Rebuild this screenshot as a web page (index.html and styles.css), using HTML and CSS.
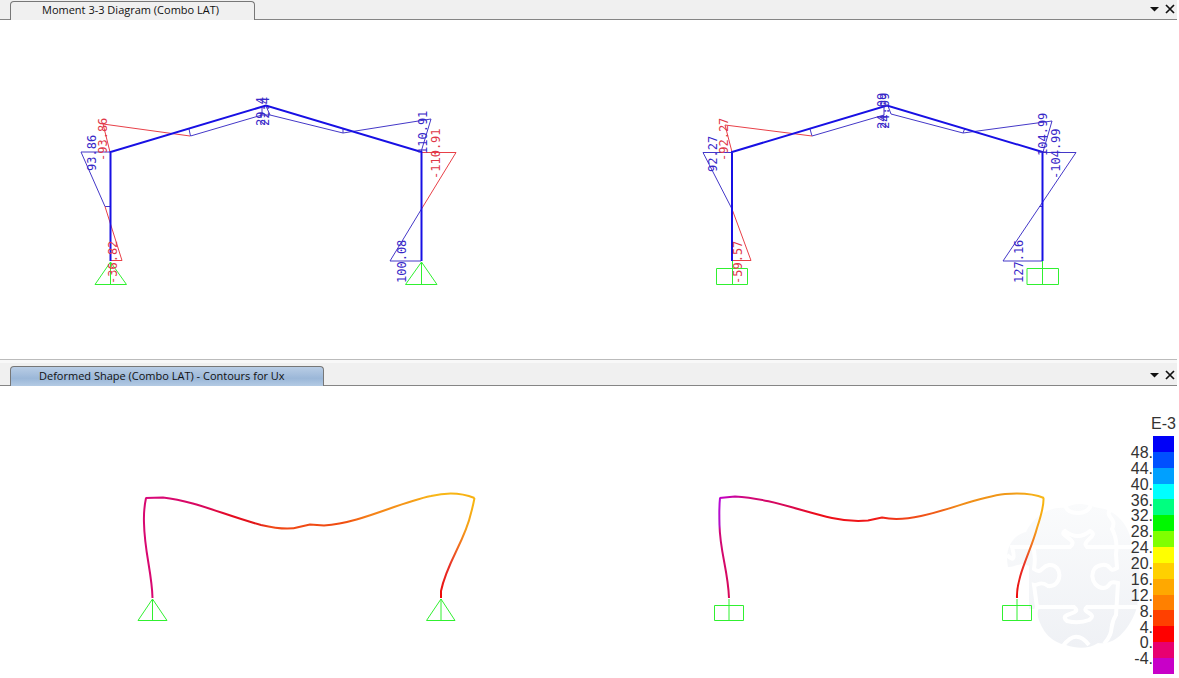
FILE: index.html
```html
<!DOCTYPE html>
<html lang="en">
<head>
    <meta charset="UTF-8">
    <meta name="viewport" content="width=device-width, initial-scale=1.0">
    <title>Portal frame results</title>
    <link rel="stylesheet" href="styles.css">
</head>
<body>
    <section class="pane">
        <div class="tabbar">
            <button type="button" class="tab tab-moment">Moment 3-3 Diagram (Combo LAT)</button>
            <div class="tab-actions">
                <button type="button" class="icon-btn" aria-label="Window list">
                    <svg width="9" height="5" viewBox="0 0 9 5"><path d="M0 0h9L4.500 4.500z" fill="#111"/></svg>
                </button>
                <button type="button" class="icon-btn" aria-label="Close">
                    <svg width="10" height="10" viewBox="0 0 10 10"><path d="M1 1l8 8M9 1l-8 8" stroke="#111" stroke-width="1.700"/></svg>
                </button>
            </div>
        </div>

        <svg class="scene" viewBox="0 20 1177 339">
            <!-- pinned frame -->
            <g class="moment positive">
                <path d="M110 152H81L105 206.500H110M189 129L190.500 136L262 115V106M266 106L270 115L343 133V128M343 133L431 119L421 152M262 115H270"/>
                <path d="M421.500 209L390 261H421"/>
            </g>
            <g class="moment negative">
                <path d="M110 152L103 124L190 136M105 206.500L122 260.500H110M421 152.500H456L421.500 209"/>
            </g>
            <path class="support" d="M110.500 262L95 284.500H126.500ZM110.500 262V284M421.500 262L405.500 284.500H437ZM421.500 262V284"/>
            <path class="member" d="M110.500 261V152L266 105.500L421.500 152V261"/>
            <g class="values positive">
                <text transform="translate(96 171) rotate(-90)">93.86</text>
                <text transform="translate(265 126) rotate(-90)">29.4</text>
                <text transform="translate(269 126) rotate(-90)">22.4</text>
                <text transform="translate(427 154) rotate(-90)">110.91</text>
                <text transform="translate(406 283) rotate(-90)">100.08</text>
            </g>
            <g class="values negative">
                <text transform="translate(107 161) rotate(-90)">-93.86</text>
                <text transform="translate(117 284) rotate(-90)">-36.82</text>
                <text transform="translate(440 179) rotate(-90)">-110.91</text>
            </g>

            <!-- fixed frame -->
            <g class="moment positive">
                <path d="M732 152.500H703L732 209M810 129L812 136L884 115V106M888 106L891 114L963 133L965 128M963 133L1052 121L1043 152"/>
                <path d="M1042 152.500H1076L1003 261H1042M1039 206.500H1043"/>
            </g>
            <g class="moment negative">
                <path d="M732 152L725 125L812 136M732 209L751 260.500H732"/>
            </g>
            <path class="support" d="M716.500 268.500H747.500V284.500H716.500ZM732.500 261V284M1027 268.500H1058.500V284.500H1027ZM1042.500 261V284"/>
            <path class="member" d="M732 261V152L887 105.500L1042.500 152V261"/>
            <g class="values positive">
                <text transform="translate(717 172) rotate(-90)">92.27</text>
                <text transform="translate(886 129) rotate(-90)">24.09</text>
                <text transform="translate(889 129) rotate(-90)">24.09</text>
                <text transform="translate(1047 156) rotate(-90)">104.99</text>
                <text transform="translate(1060 179) rotate(-90)">-104.99</text>
                <text transform="translate(1023 283) rotate(-90)">127.16</text>
            </g>
            <g class="values negative">
                <text transform="translate(728 161) rotate(-90)">-92.27</text>
                <text transform="translate(742 284) rotate(-90)">-59.57</text>
            </g>
        </svg>
    </section>

    <section class="pane pane-lower">
        <div class="tabbar">
            <button type="button" class="tab tab-shape active">Deformed Shape (Combo LAT) - Contours for Ux</button>
            <div class="tab-actions">
                <button type="button" class="icon-btn" aria-label="Window list">
                    <svg width="9" height="5" viewBox="0 0 9 5"><path d="M0 0h9L4.500 4.500z" fill="#111"/></svg>
                </button>
                <button type="button" class="icon-btn" aria-label="Close">
                    <svg width="10" height="10" viewBox="0 0 10 10"><path d="M1 1l8 8M9 1l-8 8" stroke="#111" stroke-width="1.700"/></svg>
                </button>
            </div>
        </div>

        <svg class="scene" viewBox="0 386 1177 292">
            <defs>
                <linearGradient id="beamPinned" gradientUnits="userSpaceOnUse" x1="145" y1="0" x2="475" y2="0">
                    <stop offset="0" stop-color="#d8087c"/>
                    <stop offset="0.180" stop-color="#d8085c"/>
                    <stop offset="0.260" stop-color="#e60a20"/>
                    <stop offset="0.340" stop-color="#e01818"/>
                    <stop offset="0.380" stop-color="#f04818"/>
                    <stop offset="0.600" stop-color="#f04c10"/>
                    <stop offset="0.680" stop-color="#f58018"/>
                    <stop offset="0.800" stop-color="#f59a18"/>
                    <stop offset="0.880" stop-color="#f8b818"/>
                    <stop offset="1" stop-color="#f8b010"/>
                </linearGradient>
                <linearGradient id="beamFixed" gradientUnits="userSpaceOnUse" x1="719" y1="0" x2="1044" y2="0">
                    <stop offset="0" stop-color="#c000c8"/>
                    <stop offset="0.080" stop-color="#d0087c"/>
                    <stop offset="0.220" stop-color="#d80850"/>
                    <stop offset="0.300" stop-color="#ec0c18"/>
                    <stop offset="0.480" stop-color="#f01818"/>
                    <stop offset="0.560" stop-color="#f04018"/>
                    <stop offset="0.680" stop-color="#f06018"/>
                    <stop offset="0.740" stop-color="#f08c18"/>
                    <stop offset="0.900" stop-color="#f09a18"/>
                    <stop offset="1" stop-color="#f8b818"/>
                </linearGradient>
                <linearGradient id="columnLeft" gradientUnits="userSpaceOnUse" x1="0" y1="498" x2="0" y2="598">
                    <stop offset="0" stop-color="#b808d8"/>
                    <stop offset="0.280" stop-color="#b010c8"/>
                    <stop offset="0.320" stop-color="#d00878"/>
                    <stop offset="1" stop-color="#d80858"/>
                </linearGradient>
                <linearGradient id="columnRight" gradientUnits="userSpaceOnUse" x1="0" y1="498" x2="0" y2="598">
                    <stop offset="0" stop-color="#f8b810"/>
                    <stop offset="0.300" stop-color="#f5a018"/>
                    <stop offset="0.500" stop-color="#f06820"/>
                    <stop offset="0.680" stop-color="#e83028"/>
                    <stop offset="1" stop-color="#ec0808"/>
                </linearGradient>
                <linearGradient id="brainFill" x1="0" y1="0" x2="0" y2="1">
                    <stop offset="0" stop-color="#fafbfc"/>
                    <stop offset="1" stop-color="#eff1f5"/>
                </linearGradient>
            </defs>

            <!-- puzzle brain watermark -->
            <g class="watermark">
                <path class="watermark-body" d="M1008 567C1004 548 1013 535 1026 532C1032 519 1048 506 1065 508C1078 500 1090 506 1099 508C1116 510 1128 524 1132 543C1140 550 1142 575 1137 607C1130 630 1114 646 1098 643C1088 649 1078 649 1066 645C1050 642 1040 630 1036 609H1029V566C1020 561 1014 568 1008 567Z"/>
                <path class="watermark-seams" d="M1007 555Q1017 565 1012 547H1070C1080 539 1057 536 1065 531Q1078 541 1090 531C1100 536 1080 541 1087 547H1137M1033 547Q1036 556 1034 569C1042 575 1041 566 1049 565C1064 564 1062 588 1048 586C1040 580 1038 586 1034 585L1037 607H1074C1084 615 1057 612 1067 621Q1079 624 1089 620C1099 613 1080 613 1087 607H1137M1037 607Q1033 617 1040 630L1043 640M1065 504Q1066 513 1078 513Q1089 513 1091 504M1111 508C1103 518 1118 517 1112 529Q1118 540 1116 554L1117 568C1108 574 1112 563 1102 565C1088 566 1090 587 1103 588C1112 588 1106 580 1118 583L1116 615C1108 627 1116 630 1104 644M1063 646Q1076 628 1089 645"/>
            </g>

            <g class="deformed">
                <path stroke="#d80870" d="M152.500 598C152 573 144.500 552 144 523Q143.500 510 146 498"/>
                <path stroke="url(#columnRight)" d="M441 598V591C447 562 465 541 471 513Q473 506 474.500 498"/>
                <path stroke="url(#beamPinned)" d="M145.500 498L163 497.500C195 501 224 515 261 525Q287 531 299 527L310 524.500L324 525.500C361 523 397 503 431 496Q455 490 474.500 498"/>
                <path stroke="url(#columnLeft)" d="M729 598C728 570 720 552 719.500 525Q719 507 720 498"/>
                <path stroke="url(#columnRight)" d="M1017 598C1016 577 1031 551 1037 528Q1044 507 1043.500 498"/>
                <path stroke="url(#beamFixed)" d="M719.500 498L735 496.500C768 498 801 511 832 518Q850 522 868 520.500L882 517.500Q898 521 921 516C953 509 978 497 1005 494Q1030 492 1044 498"/>
            </g>
            <path class="support" d="M152.500 599L138 620.500H167ZM152.500 599V620M441 599L426.500 620.500H455ZM441 599V620M714.500 605.500H743.500V620.500H714.500ZM729 599V620M1002.500 605.500H1031.500V620.500H1002.500ZM1017 599V620"/>
        </svg>

        <div class="legend">
            <div class="legend-unit">E-3</div>
            <div class="legend-body">
                <div class="legend-labels">
                    <span>48.</span>
                    <span>44.</span>
                    <span>40.</span>
                    <span>36.</span>
                    <span>32.</span>
                    <span>28.</span>
                    <span>24.</span>
                    <span>20.</span>
                    <span>16.</span>
                    <span>12.</span>
                    <span>8.</span>
                    <span>4.</span>
                    <span>0.</span>
                    <span>-4.</span>
                </div>
                <div class="legend-bar">
                    <i class="c48"></i>
                    <i class="c44"></i>
                    <i class="c40"></i>
                    <i class="c36"></i>
                    <i class="c32"></i>
                    <i class="c28"></i>
                    <i class="c24"></i>
                    <i class="c20"></i>
                    <i class="c16"></i>
                    <i class="c12"></i>
                    <i class="c8"></i>
                    <i class="c4"></i>
                    <i class="c0"></i>
                    <i class="cm4"></i>
                    <i class="cmin"></i>
                </div>
            </div>
        </div>
    </section>
</body>
</html>
```

FILE: styles.css
```css
* {
    box-sizing: border-box;
}

body {
    margin: 0;
    padding-right: 2px;
    background-color: #fff;
    color: #222;
    font-family: "Open Sans", "Segoe UI", sans-serif;
}

.pane {
    position: relative;
}

.pane-lower {
    border-top: 1px solid #bbb;
}

.tabbar {
    display: flex;
    justify-content: space-between;
    align-items: flex-end;
    height: 20px;
    padding-left: 10px;
    background-color: #f0f0f0;
    border-bottom: 1px solid #858585;
}

.pane-lower .tabbar {
    height: 26px;
    border-top: 3px solid #f8f8f8;
}

.tab {
    height: 19px;
    margin-bottom: -1px;
    padding: 0 35px 2px 31px;
    border: 1px solid #777;
    border-bottom: none;
    border-radius: 4px 4px 0 0;
    background-color: #f0f0f0;
    color: #111;
    font-family: inherit;
    font-size: 11px;
    line-height: 16px;
    white-space: nowrap;
}

.tab.active {
    height: 20px;
    padding: 0 38px 2px 28px;
    background: linear-gradient(#b9cde5, #9bb7d8 60%, #b3cae4);
}

.tab-actions {
    display: flex;
    align-items: center;
    height: 20px;
    gap: 6px;
    padding-right: 2px;
}

.icon-btn {
    display: flex;
    padding: 0;
    border: none;
    background: none;
}

.scene {
    display: block;
    width: 100%;
    height: auto;
    fill: none;
}

.member {
    stroke: #1810e4;
    stroke-width: 2;
}

.moment {
    stroke-width: 1;
}

.moment.positive {
    stroke: #4438c8;
}

.moment.negative {
    stroke: #e84048;
}

.support {
    stroke: #30f030;
    stroke-width: 1;
}

.values {
    font-family: "DejaVu Sans Mono", monospace;
    font-size: 12px;
}

.values.positive {
    fill: #3828c8;
}

.values.negative {
    fill: #e03848;
}

.deformed {
    stroke-width: 2;
    stroke-linejoin: round;
}

.watermark-body {
    fill: url(#brainFill);
}

.watermark-seams {
    stroke: #fff;
    stroke-width: 4;
}

.legend {
    position: absolute;
    top: 54px;
    right: 0;
    font-family: "Liberation Sans", Arial, sans-serif;
    font-size: 16px;
    color: #333;
}

.legend-unit {
    height: 22px;
    padding-right: 1px;
    line-height: 20px;
    text-align: right;
}

.legend-body {
    display: flex;
    height: 238px;
    padding-right: 3px;
}

.legend-labels {
    display: grid;
    grid-template-rows: repeat(15, 1fr);
    padding-top: 9px;
    margin-bottom: -9px;
    line-height: 15px;
    text-align: right;
}

.legend-bar {
    display: flex;
    flex-direction: column;
    width: 21px;
}

.legend-bar i {
    flex: 1;
}

.c48 { background-color: #0000f8; }
.c44 { background-color: #0050ff; }
.c40 { background-color: #00a0ff; }
.c36 { background-color: #00ffff; }
.c32 { background-color: #00ff80; }
.c28 { background-color: #00f800; }
.c24 { background-color: #80ff00; }
.c20 { background-color: #ffff00; }
.c16 { background-color: #ffd000; }
.c12 { background-color: #ffa800; }
.c8 { background-color: #ff8000; }
.c4 { background-color: #ff4000; }
.c0 { background-color: #ff0000; }
.cm4 { background-color: #e80070; }
.cmin { background-color: #c800c8; }
```
